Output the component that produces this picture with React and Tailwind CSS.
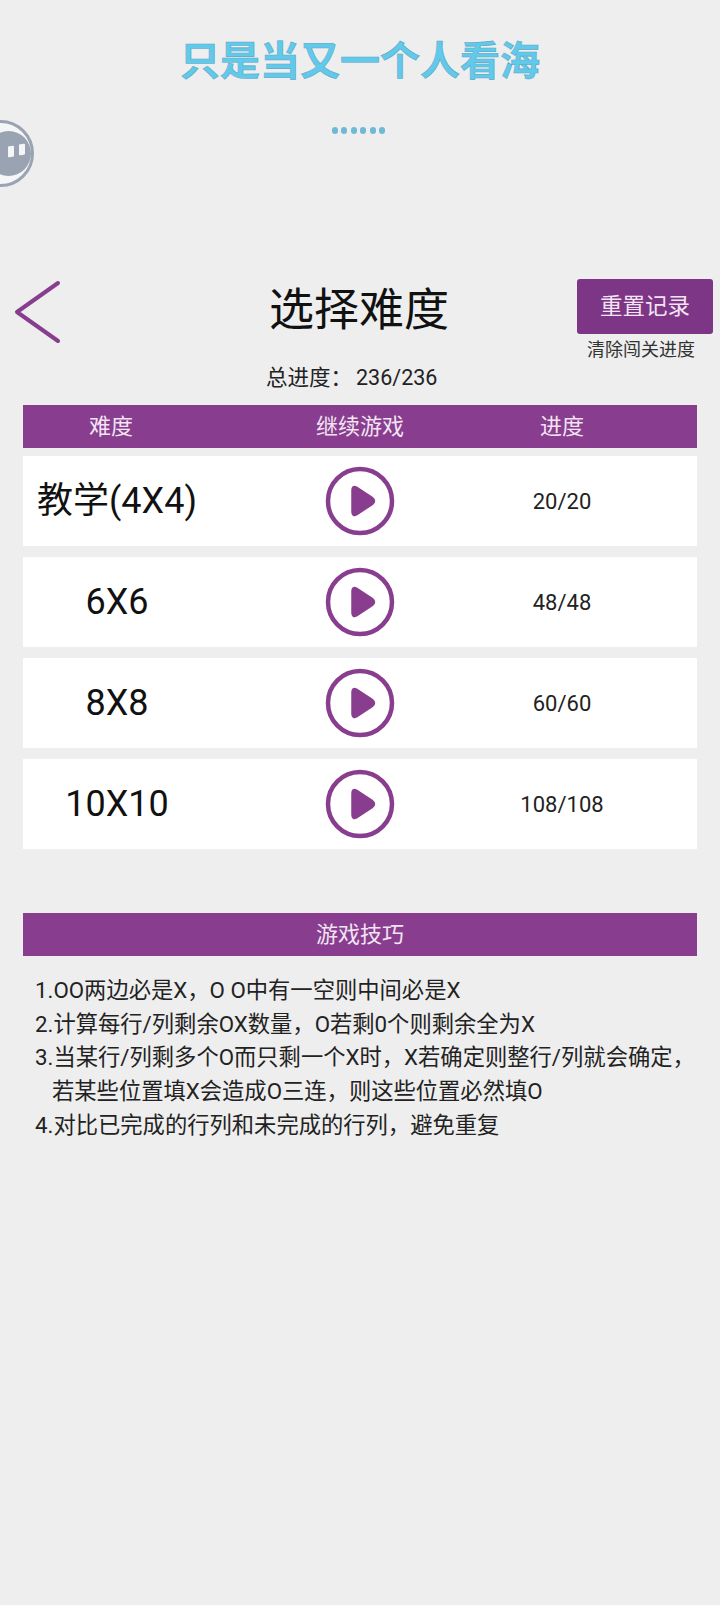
const CJK = "font-['Roboto','Noto_Sans_CJK_SC',sans-serif]";

function PlayIcon() {
  return (
    <svg width="70" height="70" viewBox="0 0 70 70" fill="none">
      <circle cx="35" cy="35" r="32" stroke="#883d8f" strokeWidth="4.5" />
      <path d="M31 22 Q28 20.5 28 24 L28 46 Q28 49.5 31 48 L47 37.5 Q50 35 47 32.5 Z" fill="#883d8f" stroke="#883d8f" strokeWidth="3.5" strokeLinejoin="round" />
    </svg>
  );
}

function Row({ name, progress }) {
  return (
    <div className="grid grid-cols-[188px_298px_106px] items-center h-[90px] bg-white">
      <div className="text-center text-[36px] leading-none text-[#111] whitespace-nowrap">{name}</div>
      <div className="flex justify-center"><PlayIcon /></div>
      <div className="text-center text-[22px] text-[#222] whitespace-nowrap">{progress}</div>
    </div>
  );
}

const tips = [
  { t: "1.OO两边必是X，O O中有一空则中间必是X" },
  { t: "2.计算每行/列剩余OX数量，O若剩0个则剩余全为X" },
  { t: "3.当某行/列剩多个O而只剩一个X时，X若确定则整行/列就会确定，" },
  { t: "若某些位置填X会造成O三连，则这些位置必然填O", indent: true },
  { t: "4.对比已完成的行列和未完成的行列，避免重复" },
];

export default function App() {
  return (
    <div className={`relative h-[1605px] w-[720px] overflow-hidden bg-[#eeeeee] ${CJK}`}>
      <div className="flex h-[279px] flex-col items-center">
        <div className="mt-[38px] h-[48px] text-[40px] font-bold leading-[48px] text-[#62c9ea] [-webkit-text-stroke:0.6px_#5aa9c7] whitespace-nowrap">只是当又一个人看海</div>
        <div className="mt-[41px] ml-[-3px] flex gap-[3.6px]">
          {[0,1,2,3,4,5].map((i) => (
            <span key={i} className="h-[7px] w-[6px] rounded-full bg-[#6fb9d6]" />
          ))}
        </div>
      </div>

      <div className="absolute left-[-33px] top-[120px] flex h-[67px] w-[67px] items-center justify-end rounded-full border-[3px] border-[#9aa3b2] bg-[#f5f6f7]">
        <div className="relative h-[45px] w-[45px] rounded-full bg-[#9aa3b2]">
          <span className="absolute left-[22px] top-[15px] h-[11px] w-[6px] skew-y-[-8deg] rounded-[1px] bg-[#f5f6f7]" />
          <span className="absolute left-[33px] top-[13px] h-[11px] w-[6px] skew-y-[-8deg] rounded-[1px] bg-[#f5f6f7]" />
        </div>
      </div>

      <div className="grid grid-cols-[14px_1fr_136px_7px] items-start">
        <div />
        <div className="relative flex h-[55px]">
          <svg width="48" height="64" viewBox="0 0 48 64" fill="none" className="mt-[1px] shrink-0">
            <path d="M44 3 L3 32 L44 61" stroke="#883d8f" strokeWidth="4" strokeLinecap="round" strokeLinejoin="round" />
          </svg>
          <div className="ml-[207px] mt-[4px] text-[45px] leading-[56px] text-[#111] whitespace-nowrap">选择难度</div>
        </div>
        <div className="flex flex-col items-center">
          <div className="flex h-[55px] w-[136px] items-center justify-center rounded-[3px] bg-[#7d3585] text-[22.5px] text-[#f3e4f3]">重置记录</div>
          <div className="mt-[4px] ml-[-8px] text-[18px] leading-[24px] text-[#333] whitespace-nowrap">清除闯关进度</div>
        </div>
        <div />
      </div>

      <div className="mt-[2px] flex pl-[266px] text-[21.5px] leading-[28px] text-[#222] whitespace-nowrap">总进度：<span className="ml-[4px]">236/236</span></div>

      <div className="mx-[23px] mt-[13px] flex w-[674px] flex-col">
        <div className="grid h-[43px] grid-cols-[176px_322px_82px] items-center bg-[#883d8f] text-center text-[22px] text-[#f3e4f3]">
          <div>难度</div>
          <div>继续游戏</div>
          <div>进度</div>
        </div>
        <div className="mt-[8px] flex flex-col gap-[11px]">
          <Row name="教学(4X4)" progress="20/20" />
          <Row name="6X6" progress="48/48" />
          <Row name="8X8" progress="60/60" />
          <Row name="10X10" progress="108/108" />
        </div>

        <div className="mt-[64px] flex h-[43px] items-center justify-center bg-[#883d8f] text-[22px] text-[#f3e4f3]">游戏技巧</div>
        <div className="mt-[18px] pl-[12px] text-[22.3px] leading-[33.7px] text-[#222] whitespace-pre">
          {tips.map(({ t, indent }) => <div key={t} className={indent ? "pl-[17px]" : ""}>{t}</div>)}
        </div>
      </div>
    </div>
  );
}
